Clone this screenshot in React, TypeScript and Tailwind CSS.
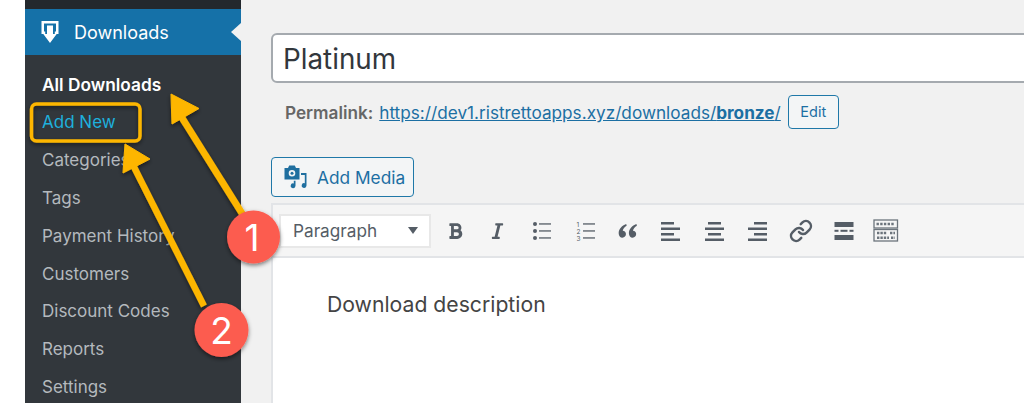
import { FaBold, FaItalic } from 'react-icons/fa'
import { Link } from 'lucide-react'

const subItems = ['Categories', 'Tags', 'Payment History', 'Customers', 'Discount Codes', 'Reports', 'Settings']

function DownloadIcon() {
  return (
    <svg width="18" height="24" viewBox="0 0 18 24" fill="white" className="shrink-0">
      <path d="M0.500 1h17v13h-3.700v-2.500h1.200V3.500H3v8h1.200V14H.5z" />
      <path d="M6 5.500h6v8.500h3.700L9 23 2.300 14H6z" />
    </svg>
  )
}

function MediaIcon() {
  return (
    <svg width="23" height="24" viewBox="0 0 23 24" fill="#1f6f9f">
      <path fillRule="evenodd" d="M0.500 3h3.500l1.200-2.500h5.600L12 3h3.500v11.500H.5zM8 5a3.300 3.300 0 1 0 0 6.600A3.300 3.300 0 0 0 8 5z" />
      <circle cx="8" cy="8.300" r="1.500" />
      <path d="M11.500 15.800v5a2.400 2.400 0 1 1-1.700-2.300v-2.700zM17 8h5.500v12.500a2.400 2.400 0 1 1-1.700-2.300V10H17z" />
    </svg>
  )
}

function Lines({ rows }: { rows: [number, number][] }) {
  return (
    <svg width="20" height="20" viewBox="0 0 20 20" fill="#555d66">
      {rows.map(([x, w], i) => (
        <rect key={i} x={x} y={1 + i * 5.500} width={w} height="2.500" />
      ))}
    </svg>
  )
}

function BulletList() {
  return (
    <svg width="20" height="20" viewBox="0 0 20 20" fill="#555d66">
      <circle cx="3" cy="3" r="2" />
      <circle cx="3" cy="10" r="2" />
      <circle cx="3" cy="17" r="2" />
      <rect x="7" y="2.300" width="12" height="1.300" />
      <rect x="7" y="9.300" width="12" height="1.300" />
      <rect x="7" y="16.300" width="12" height="1.300" />
    </svg>
  )
}

function NumberList() {
  return (
    <svg width="20" height="22" viewBox="0 0 20 22" fill="#555d66">
      <rect x="7" y="3.300" width="12" height="1.300" />
      <rect x="7" y="10.300" width="12" height="1.300" />
      <rect x="7" y="17.300" width="12" height="1.300" />
      <text x="0.500" y="7" fontSize="6.500" fontFamily="Inter, sans-serif">1</text>
      <text x="0.500" y="14" fontSize="6.500" fontFamily="Inter, sans-serif">2</text>
      <text x="0.500" y="21" fontSize="6.500" fontFamily="Inter, sans-serif">3</text>
    </svg>
  )
}

function QuoteIcon() {
  return (
    <svg width="20" height="16" viewBox="0 0 22 18" fill="#555d66">
      <path d="M9 1C4 3 .5 6.500.5 11.500c0 3 1.800 5 4.200 5 2.300 0 4-1.700 4-4 0-2.200-1.500-3.800-3.600-3.800C5.600 6.200 7 4.300 9.500 3zM20.500 1c-5 2-8.500 5.500-8.500 10.500 0 3 1.800 5 4.200 5 2.300 0 4-1.700 4-4 0-2.200-1.500-3.800-3.600-3.800.5-2.500 1.900-4.400 4.400-5.700z" />
    </svg>
  )
}

function MoreIcon() {
  return (
    <svg width="20" height="20" viewBox="0 0 20 20" fill="#555d66">
      <rect x="0.500" y="1" width="19" height="5" />
      <rect x="0.500" y="8.800" width="4" height="2" />
      <rect x="6.500" y="8.800" width="7" height="2" />
      <rect x="15.500" y="8.800" width="4" height="2" />
      <rect x="0.500" y="14" width="19" height="5" />
    </svg>
  )
}

function KitchenIcon() {
  return (
    <svg width="26" height="24" viewBox="0 0 26 24" fill="none" stroke="#6c747c">
      <rect x="1" y="1" width="23.500" height="8" strokeWidth="1.300" />
      <rect x="1" y="10.500" width="23.500" height="11.500" strokeWidth="1.300" />
      <path d="M3.500 5h18.500" strokeWidth="2.400" strokeDasharray="2.400 1.300" />
      <path d="M4 14h10M17 14h5M4 18.800h12M18 18.800h4" strokeWidth="2.400" strokeDasharray="2.400 1" />
    </svg>
  )
}

function Annotations() {
  return (
    <svg className="absolute left-0 top-0" width="1024" height="403" viewBox="0 0 1024 403">
      <defs>
        <filter id="shadow" x="-30%" y="-30%" width="160%" height="160%">
          <feDropShadow dx="0" dy="2" stdDeviation="2" floodColor="#000" floodOpacity="0.5" />
        </filter>
      </defs>
      <g filter="url(#shadow)">
        <rect x="31.500" y="104" width="108.500" height="37" rx="5" fill="none" stroke="#fdb600" strokeWidth="3.500" />
        <g fill="#fdb600" stroke="#fdb600">
          <path d="M171 94l28 14.500-27 15.500z" />
          <path d="M179 113l64 102" strokeWidth="7" />
          <path d="M125 144l25 15-27 14z" />
          <path d="M133 165l71 141" strokeWidth="6.500" />
        </g>
      </g>
      <g filter="url(#shadow)">
        <circle cx="253.500" cy="237" r="26.500" fill="#fc5b50" />
        <circle cx="221.500" cy="330" r="27" fill="#fc5b50" />
      </g>
      <text x="252" y="251" textAnchor="middle" fontSize="37" fontFamily="Inter, sans-serif" fill="#fff">1</text>
      <text x="221.500" y="344" textAnchor="middle" fontSize="37" fontFamily="Inter, sans-serif" fill="#fff">2</text>
    </svg>
  )
}

export default function App() {
  return (
    <div className="relative flex h-[403px] w-[1024px] overflow-hidden bg-[#f1f1f1] font-['Inter',sans-serif]">
      <div className="w-[25px] shrink-0 bg-white" />

      <aside className="flex w-[216px] shrink-0 flex-col bg-[#32373c]">
        <div className="h-[9px] shrink-0 bg-[#23282d]" />
        <div className="relative flex h-[46px] shrink-0 items-center bg-[#1571a8] pl-4 text-white">
          <DownloadIcon />
          <span className="ml-[15px] pt-[2px] text-[18px] leading-none">Downloads</span>
          <span className="absolute right-0 top-[14px] border-y-[9px] border-r-[10px] border-y-transparent border-r-[#f1f1f1]" />
        </div>
        <ul className="flex flex-col pl-[17px] pt-[11px] text-[17px]">
          <li className="flex h-[38px] shrink-0 items-center text-[17.300px] font-semibold text-white">All Downloads</li>
          <li className="flex h-[38px] shrink-0 items-center text-[#1eb0dd]">Add New</li>
          {subItems.map(item => (
            <li key={item} className="flex h-[37.800px] shrink-0 items-center text-[#b4b9be]">{item}</li>
          ))}
        </ul>
      </aside>

      <main className="min-w-0 flex-1 pl-[30px] pt-[33px]">
        <div className="flex h-[50px] w-[800px] items-center rounded-md border-2 border-[#a5aaaf] bg-white pl-[10px] pt-[3px] text-[27.800px] text-[#32373c]">
          Platinum
        </div>

        <div className="mt-[12px] flex h-[34px] items-center whitespace-nowrap pl-[14px] pt-[2px] text-[17.200px]">
          <span className="font-semibold text-[#666]">Permalink:</span>
          <span className="ml-[6px] text-[#1c6fa3] underline">
            https://dev1.ristrettoapps.xyz/downloads/<b>bronze</b>/
          </span>
          <span className="ml-[7px] -mt-[2px] flex h-[34px] w-[51px] shrink-0 items-center justify-center rounded border border-[#1f78a8] bg-[#f3f5f6] text-[14.500px] text-[#1c6fa3]">
            Edit
          </span>
        </div>

        <div className="mt-[28px] flex h-[40px] w-[143px] items-center rounded border-[1.500px] border-[#1f78a8] bg-[#f3f5f6] pl-[12px] text-[#1c6fa3]">
          <MediaIcon />
          <span className="ml-[10px] pt-[2px] text-[17.300px]">Add Media</span>
        </div>

        <div className="mt-[6px] w-[800px] border-2 border-[#e2e4e7] bg-white">
          <div className="flex h-[53px] items-center border-b-2 border-[#e2e4e7] bg-[#f5f5f5] pl-[6px]">
            <div className="flex h-[34px] w-[152px] shrink-0 items-center justify-between border-2 border-[#e8e8e8] bg-white pl-[12px] pr-[11px] text-[17.200px] text-[#555d66]">
              Paragraph
              <span className="border-x-[5.500px] border-t-[7px] border-x-transparent border-t-[#555d66]" />
            </div>
            <div className="ml-[17px] flex w-[15px] justify-center text-[#555d66]"><FaBold size={18} /></div>
            <div className="ml-[27px] flex w-[15px] justify-center text-[#555d66]"><FaItalic size={18} /></div>
            <div className="ml-[27px] flex"><BulletList /></div>
            <div className="ml-[24px] flex"><NumberList /></div>
            <div className="ml-[22px] flex"><QuoteIcon /></div>
            <div className="ml-[23px] flex"><Lines rows={[[0, 13], [0, 19], [0, 13], [0, 19]]} /></div>
            <div className="ml-[24px] flex"><Lines rows={[[3, 13], [0, 19], [3, 13], [0, 19]]} /></div>
            <div className="ml-[23px] flex"><Lines rows={[[6, 13], [0, 19], [6, 13], [0, 19]]} /></div>
            <div className="ml-[21px] flex text-[#555d66]"><Link size={24} strokeWidth={2.500} /></div>
            <div className="ml-[21px] flex"><MoreIcon /></div>
            <div className="ml-[19px] flex"><KitchenIcon /></div>
          </div>
          <div className="h-[200px] pl-[54px] pt-[31px] text-[21.200px] text-[#444]">Download description</div>
        </div>
      </main>

      <Annotations />
    </div>
  )
}
